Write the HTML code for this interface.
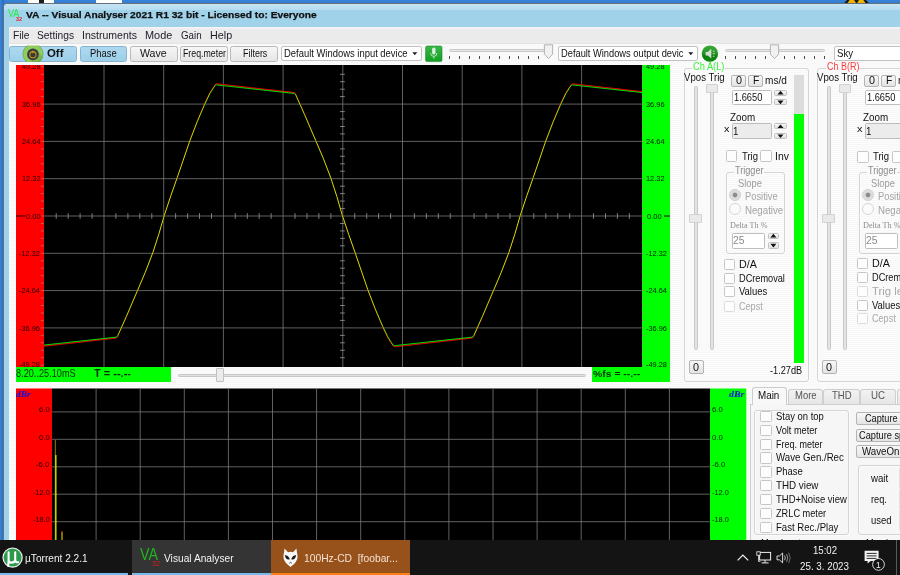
<!DOCTYPE html>
<html lang="en"><head><meta charset="utf-8"><title>VA -- Visual Analyser 2021 R1 32 bit</title>
<style>
html,body{margin:0;padding:0;background:#fafafa}
#r{position:relative;width:900px;height:575px;overflow:hidden;background:#fafafa;font-family:"Liberation Sans",sans-serif}
#r>div,#r>svg{position:absolute}
#r>svg{overflow:visible}
.t{white-space:pre;transform-origin:0 0}
</style></head>
<body>
<div id="r">
<div style="left:0px;top:0px;width:900px;height:4px;background:linear-gradient(#3784d8,#3179cb)"></div>
<div style="left:0px;top:0px;width:4px;height:541px;background:linear-gradient(90deg,#3a86d9,#2368bf)"></div>
<div style="left:28.3px;top:0px;width:25.7px;height:3px;background:#fff"></div>
<div style="left:38.6px;top:0px;width:5.2px;height:3px;background:#1c1c1c"></div>
<div style="left:95.8px;top:0px;width:26.2px;height:3px;background:#fff"></div>
<svg style="left:842px;top:0" width="30" height="4" viewBox="842 0 30 4"><path d="M844 3.2 L847 0 H866 L869 3.2 Z" fill="#1a1a1a"/><path d="M847.6 3 L849.6 0 H854 L856 3 Z M857.2 3 L859 0 H863.4 L865.4 3 Z" fill="#f0b400"/></svg>
<div style="left:3.2px;top:2.9px;width:900px;height:540px;background:#a0d2ea;border:0.9px solid #66717c;border-radius:4px 0 0 0;box-sizing:border-box"></div>
<div style="left:4.1px;top:3.8px;width:896px;height:6.6px;background:linear-gradient(#c8e5f4,#b3dbef);border-radius:3.5px 0 0 0"></div>
<div style="left:8.7px;top:26.5px;width:892px;height:515px;background:repeating-linear-gradient(#fcfcfc 0,#fcfcfc 0.8px,#f6f6f6 1.4px,#fcfcfc 2px)"></div>
<div style="left:8.7px;top:26.5px;width:892px;height:17.2px;background:linear-gradient(#f6f6f6,#ebebeb 3px,#ebebeb 15.5px,#dfdfdf)"></div>
<div style="left:8.7px;top:43.7px;width:892px;height:21px;background:#f9f9f9"></div>
<div class="t" style="left:7.55px;top:7.55px;font:normal 11.5px/1 'Liberation Sans', sans-serif;color:#22ee44;transform:scaleX(0.783);">VA</div>
<div class="t" style="left:15.53px;top:16.80px;font:bold 5px/1 'Liberation Sans', sans-serif;color:#ee2222;transform:scaleX(1.079);">32</div>
<div class="t" style="left:25.79px;top:9.90px;font:bold 9.8px/1 'Liberation Sans', sans-serif;color:#101010;transform:scaleX(1.045);-webkit-text-stroke:0.25px #101010;">VA -- Visual Analyser 2021 R1 32 bit - Licensed to: Everyone</div>
<div class="t" style="left:12.99px;top:30.70px;font:normal 10.2px/1 'Liberation Sans', sans-serif;color:#1c1c28;transform:scaleX(1.006);">File</div>
<div class="t" style="left:36.99px;top:30.70px;font:normal 10.2px/1 'Liberation Sans', sans-serif;color:#1c1c28;transform:scaleX(1.006);">Settings</div>
<div class="t" style="left:82.17px;top:30.70px;font:normal 10.2px/1 'Liberation Sans', sans-serif;color:#1c1c28;transform:scaleX(1.034);">Instruments</div>
<div class="t" style="left:145.45px;top:30.70px;font:normal 10.2px/1 'Liberation Sans', sans-serif;color:#1c1c28;transform:scaleX(1.072);">Mode</div>
<div class="t" style="left:181.21px;top:30.70px;font:normal 10.2px/1 'Liberation Sans', sans-serif;color:#1c1c28;transform:scaleX(0.958);">Gain</div>
<div class="t" style="left:210.26px;top:30.70px;font:normal 10.2px/1 'Liberation Sans', sans-serif;color:#1c1c28;transform:scaleX(1.060);">Help</div>
<div style="left:9.2px;top:45.5px;width:68.3px;height:16.3px;background:linear-gradient(#add9ef,#9dcfe9);border:0.8px solid #86b3cf;border-radius:2.5px;box-sizing:border-box"></div>
<div class="t" style="left:47.13px;top:48.40px;font:bold 11.8px/1 'Liberation Sans', sans-serif;color:#111;transform:scaleX(0.967);">Off</div>
<div style="left:79.5px;top:45.5px;width:47.9px;height:16.3px;background:linear-gradient(#add9ef,#9dcfe9);border:0.8px solid #86b3cf;border-radius:2.5px;box-sizing:border-box"></div>
<div class="t" style="left:90.23px;top:48.70px;font:normal 10.2px/1 'Liberation Sans', sans-serif;color:#111;transform:scaleX(0.921);">Phase</div>
<div style="left:129.6px;top:45.5px;width:48px;height:16.3px;background:linear-gradient(#f6f6f6,#e6e6e6);border:0.8px solid #b9b9b9;border-radius:2.5px;box-sizing:border-box"></div>
<div class="t" style="left:140.47px;top:48.70px;font:normal 10.2px/1 'Liberation Sans', sans-serif;color:#111;transform:scaleX(1.041);">Wave</div>
<div style="left:180px;top:45.5px;width:48.3px;height:16.3px;background:linear-gradient(#f6f6f6,#e6e6e6);border:0.8px solid #b9b9b9;border-radius:2.5px;box-sizing:border-box"></div>
<div class="t" style="left:182.56px;top:48.70px;font:normal 10.2px/1 'Liberation Sans', sans-serif;color:#111;transform:scaleX(0.863);">Freq.meter</div>
<div style="left:230.3px;top:45.5px;width:47.7px;height:16.3px;background:linear-gradient(#f6f6f6,#e6e6e6);border:0.8px solid #b9b9b9;border-radius:2.5px;box-sizing:border-box"></div>
<div class="t" style="left:242.55px;top:48.70px;font:normal 10.2px/1 'Liberation Sans', sans-serif;color:#111;transform:scaleX(0.877);">Filters</div>
<svg style="left:21px;top:42px" width="26" height="24" viewBox="21 42 26 24">
<clipPath id="co"><rect x="21" y="45.4" width="26" height="16.8"/></clipPath>
<g clip-path="url(#co)">
<circle cx="33" cy="53.9" r="10.3" fill="#8fcd60"/>
<clipPath id="co2"><circle cx="33" cy="53.9" r="10.3"/></clipPath><path clip-path="url(#co2)" d="M37 50.3 L44 58.5 L41 64 L33 64 L28.8 58.6 Z" fill="#7ab551"/>
<circle cx="33" cy="53.9" r="10.1" fill="none" stroke="#4a6a3a" stroke-width="0.5" opacity="0.6"/>
</g>
<circle cx="32.9" cy="54.4" r="5.8" fill="#3a3a3c"/>
<circle cx="32.9" cy="54.7" r="3.1" fill="none" stroke="#c49a18" stroke-width="1.05"/>
<rect x="32.3" y="50.6" width="1.2" height="2.6" fill="#c49a18"/>
</svg>
<div style="left:281px;top:45.6px;width:141.4px;height:15.6px;background:#fff;border:0.8px solid #c2c2c2;border-radius:2px;box-sizing:border-box"></div>
<div class="t" style="left:283.93px;top:48.70px;font:normal 10.2px/1 'Liberation Sans', sans-serif;color:#111;transform:scaleX(0.925);">Default Windows input device</div>
<svg style="left:412.2px;top:51.5px" width="6" height="4"><path d="M0.3 0.3 L5.3 0.3 L2.8 3.2 Z" fill="#222"/></svg>
<div style="left:557.6px;top:45.6px;width:140.8px;height:15.6px;background:#fff;border:0.8px solid #c2c2c2;border-radius:2px;box-sizing:border-box"></div>
<div class="t" style="left:560.53px;top:48.70px;font:normal 10.2px/1 'Liberation Sans', sans-serif;color:#111;transform:scaleX(0.912);">Default Windows output devic</div>
<svg style="left:688.2px;top:51.5px" width="6" height="4"><path d="M0.3 0.3 L5.3 0.3 L2.8 3.2 Z" fill="#222"/></svg>
<div style="left:833.6px;top:45.6px;width:71.4px;height:15.6px;background:#fff;border:0.8px solid #c2c2c2;border-radius:2px;box-sizing:border-box"></div>
<div class="t" style="left:836.52px;top:48.70px;font:normal 10.2px/1 'Liberation Sans', sans-serif;color:#111;transform:scaleX(0.943);">Sky</div>
<svg style="left:425px;top:45px" width="18" height="18" viewBox="425 45 18 18">
<defs><linearGradient id="gmic" x1="0" y1="0" x2="0" y2="1"><stop offset="0" stop-color="#3cb54a"/><stop offset="1" stop-color="#10a020"/></linearGradient></defs>
<rect x="425.6" y="46" width="16.4" height="15.6" rx="1.5" fill="url(#gmic)" stroke="#1c8a2a" stroke-width="0.6"/>
<rect x="432.1" y="47.6" width="3.4" height="7" rx="1.7" fill="#d8f0d8"/>
<path d="M430.6 53 A3.2 3.4 0 0 0 437 53" fill="none" stroke="#c8e8c8" stroke-width="0.9"/>
<rect x="433.4" y="56.4" width="0.9" height="2.4" fill="#c8e8c8"/>
</svg>
<div style="left:449px;top:48.9px;width:97px;height:3.3px;background:#e6e6e6;border:0.7px solid #cacaca;border-radius:1.6px;box-sizing:border-box"></div>
<div style="left:449.1px;top:55.6px;width:1.1px;height:3px;background:#4a4a4a"></div>
<div style="left:459px;top:55.6px;width:1.1px;height:3px;background:#4a4a4a"></div>
<div style="left:468.9px;top:55.6px;width:1.1px;height:3px;background:#4a4a4a"></div>
<div style="left:478.8px;top:55.6px;width:1.1px;height:3px;background:#4a4a4a"></div>
<div style="left:488.7px;top:55.6px;width:1.1px;height:3px;background:#4a4a4a"></div>
<div style="left:498.6px;top:55.6px;width:1.1px;height:3px;background:#4a4a4a"></div>
<div style="left:508.5px;top:55.6px;width:1.1px;height:3px;background:#4a4a4a"></div>
<div style="left:518.4px;top:55.6px;width:1.1px;height:3px;background:#4a4a4a"></div>
<div style="left:528.3px;top:55.6px;width:1.1px;height:3px;background:#4a4a4a"></div>
<div style="left:538.2px;top:55.6px;width:1.1px;height:3px;background:#4a4a4a"></div>
<svg style="left:543px;top:43.5px" width="12" height="16"><path d="M1.4 0.8 L9.6 0.8 L9.6 10.2 L5.5 14.6 L1.4 10.2 Z" fill="#f1f1f1" stroke="#adadad" stroke-width="0.9"/></svg>
<div style="left:725px;top:48.9px;width:99.6px;height:3.3px;background:#e6e6e6;border:0.7px solid #cacaca;border-radius:1.6px;box-sizing:border-box"></div>
<div style="left:725.1px;top:55.6px;width:1.1px;height:3px;background:#4a4a4a"></div>
<div style="left:734.98px;top:55.6px;width:1.1px;height:3px;background:#4a4a4a"></div>
<div style="left:744.86px;top:55.6px;width:1.1px;height:3px;background:#4a4a4a"></div>
<div style="left:754.74px;top:55.6px;width:1.1px;height:3px;background:#4a4a4a"></div>
<div style="left:764.62px;top:55.6px;width:1.1px;height:3px;background:#4a4a4a"></div>
<div style="left:784.38px;top:55.6px;width:1.1px;height:3px;background:#4a4a4a"></div>
<div style="left:794.26px;top:55.6px;width:1.1px;height:3px;background:#4a4a4a"></div>
<div style="left:804.14px;top:55.6px;width:1.1px;height:3px;background:#4a4a4a"></div>
<div style="left:814.02px;top:55.6px;width:1.1px;height:3px;background:#4a4a4a"></div>
<div style="left:823.9px;top:55.6px;width:1.1px;height:3px;background:#4a4a4a"></div>
<svg style="left:768.5px;top:43.5px" width="12" height="16"><path d="M1.4 0.8 L9.6 0.8 L9.6 10.2 L5.5 14.6 L1.4 10.2 Z" fill="#f1f1f1" stroke="#adadad" stroke-width="0.9"/></svg>
<svg style="left:700px;top:44px" width="20" height="20" viewBox="700 44 20 20">
<defs><linearGradient id="gspk" x1="0" y1="0" x2="0" y2="1"><stop offset="0" stop-color="#3cab3c"/><stop offset="0.5" stop-color="#259425"/><stop offset="0.62" stop-color="#0c7e0c"/><stop offset="1" stop-color="#0a8a0a"/></linearGradient></defs>
<circle cx="709.9" cy="53.6" r="8.2" fill="url(#gspk)"/>
<path d="M705.6 52 L707.8 52 L711.3 48.8 L711.3 58.6 L707.8 55.4 L705.6 55.4 Z" fill="#d4dcd4"/>
<path d="M712.8 51.2 L714.6 51.2 M712.8 53.7 L715 53.7 M712.8 56.2 L714.6 56.2" stroke="#d0ecd0" stroke-width="0.8"/>
</svg>
<div style="left:16px;top:65px;width:28px;height:302px;background:#ff0000"></div>
<div style="left:44px;top:65px;width:598px;height:302px;background:#000"></div>
<div style="left:642px;top:65px;width:28px;height:317px;background:#00ff00"></div>
<svg style="left:0;top:0" width="900" height="575" viewBox="0 0 900 575"><g stroke="#787878" stroke-width="0.8" fill="none"><path d="M104.0 65V367"/><path d="M163.7 65V367"/><path d="M223.4 65V367"/><path d="M283.1 65V367"/><path d="M342.8 65V367"/><path d="M402.5 65V367"/><path d="M462.2 65V367"/><path d="M521.9 65V367"/><path d="M581.6 65V367"/><path d="M44 104.1H642"/><path d="M44 141.4H642"/><path d="M44 178.7H642"/><path d="M44 216.0H642"/><path d="M44 253.3H642"/><path d="M44 290.6H642"/><path d="M44 327.9H642"/></g><path d="M56.2 213.2V218.8M68.2 213.2V218.8M80.1 213.2V218.8M92.1 213.2V218.8M115.9 213.2V218.8M127.9 213.2V218.8M139.8 213.2V218.8M151.8 213.2V218.8M175.6 213.2V218.8M187.6 213.2V218.8M199.5 213.2V218.8M211.5 213.2V218.8M235.3 213.2V218.8M247.3 213.2V218.8M259.2 213.2V218.8M271.2 213.2V218.8M295.0 213.2V218.8M307.0 213.2V218.8M318.9 213.2V218.8M330.9 213.2V218.8M354.7 213.2V218.8M366.7 213.2V218.8M378.6 213.2V218.8M390.6 213.2V218.8M414.4 213.2V218.8M426.4 213.2V218.8M438.3 213.2V218.8M450.3 213.2V218.8M474.1 213.2V218.8M486.1 213.2V218.8M498.0 213.2V218.8M510.0 213.2V218.8M533.8 213.2V218.8M545.8 213.2V218.8M557.7 213.2V218.8M569.7 213.2V218.8M593.5 213.2V218.8M605.5 213.2V218.8M617.4 213.2V218.8M629.4 213.2V218.8M340 74.3H344.8M340 81.7H344.8M340 89.2H344.8M340 96.6H344.8M340 111.6H344.8M340 119.0H344.8M340 126.5H344.8M340 133.9H344.8M340 148.9H344.8M340 156.3H344.8M340 163.8H344.8M340 171.2H344.8M340 186.2H344.8M340 193.6H344.8M340 201.1H344.8M340 208.5H344.8M340 223.5H344.8M340 230.9H344.8M340 238.4H344.8M340 245.8H344.8M340 260.8H344.8M340 268.2H344.8M340 275.7H344.8M340 283.1H344.8M340 298.1H344.8M340 305.5H344.8M340 313.0H344.8M340 320.4H344.8M340 335.4H344.8M340 342.8H344.8M340 350.3H344.8M340 357.7H344.8" stroke="#8a8a8a" stroke-width="0.9" fill="none"/><path d="M40.8 66.8H44M642 66.8H645M40.8 74.3H44M642 74.3H645M40.8 81.7H44M642 81.7H645M40.8 89.2H44M642 89.2H645M40.8 96.6H44M642 96.6H645M40.8 104.1H44M642 104.1H645M40.8 111.6H44M642 111.6H645M40.8 119.0H44M642 119.0H645M40.8 126.5H44M642 126.5H645M40.8 133.9H44M642 133.9H645M40.8 141.4H44M642 141.4H645M40.8 148.9H44M642 148.9H645M40.8 156.3H44M642 156.3H645M40.8 163.8H44M642 163.8H645M40.8 171.2H44M642 171.2H645M40.8 178.7H44M642 178.7H645M40.8 186.2H44M642 186.2H645M40.8 193.6H44M642 193.6H645M40.8 201.1H44M642 201.1H645M40.8 208.5H44M642 208.5H645M40.8 216.0H44M642 216.0H645M40.8 223.5H44M642 223.5H645M40.8 230.9H44M642 230.9H645M40.8 238.4H44M642 238.4H645M40.8 245.8H44M642 245.8H645M40.8 253.3H44M642 253.3H645M40.8 260.8H44M642 260.8H645M40.8 268.2H44M642 268.2H645M40.8 275.7H44M642 275.7H645M40.8 283.1H44M642 283.1H645M40.8 290.6H44M642 290.6H645M40.8 298.1H44M642 298.1H645M40.8 305.5H44M642 305.5H645M40.8 313.0H44M642 313.0H645M40.8 320.4H44M642 320.4H645M40.8 327.9H44M642 327.9H645M40.8 335.4H44M642 335.4H645M40.8 342.8H44M642 342.8H645M40.8 350.3H44M642 350.3H645M40.8 357.7H44M642 357.7H645M40.8 365.2H44M642 365.2H645" stroke="#b08080" stroke-width="0.8" fill="none" opacity="0.8"/><path d="M16 216H25.5M664 216H670" stroke="#300" stroke-width="1"/><clipPath id="cp"><rect x="44" y="65" width="598" height="302"/></clipPath><g clip-path="url(#cp)" fill="none" stroke-linejoin="round"><polyline points="-191.7,215.3 -185.2,195.7 -178.7,177.1 -166.2,140.5 -158.7,120.9 -151.2,103.2 -146.2,92.8 -142.4,86.8 -140.9,84.6 -139.8,83.7 -61.5,92.5 -60.3,94.0 -51.7,113.4 -40.4,139.9 -32.7,158.1 -25.2,177.6 -19.2,196.2 -13.7,215.3 -7.2,234.9 -0.7,253.5 11.8,290.1 19.3,309.7 26.8,327.4 31.8,337.8 35.6,343.8 37.1,346.0 38.2,346.9 116.5,338.1 117.7,336.6 126.3,317.2 137.6,290.7 145.3,272.5 152.8,253.0 158.8,234.4 164.3,215.3 170.8,195.7 177.3,177.1 189.8,140.5 197.3,120.9 204.8,103.2 209.8,92.8 213.6,86.8 215.1,84.6 216.2,83.7 294.5,92.5 295.7,94.0 304.3,113.4 315.6,139.9 323.3,158.1 330.8,177.6 336.8,196.2 342.3,215.3 348.8,234.9 355.3,253.5 367.8,290.1 375.3,309.7 382.8,327.4 387.8,337.8 391.6,343.8 393.1,346.0 394.2,346.9 472.5,338.1 473.7,336.6 482.3,317.2 493.6,290.7 501.3,272.5 508.8,253.0 514.8,234.4 520.3,215.3 526.8,195.7 533.3,177.1 545.8,140.5 553.3,120.9 560.8,103.2 565.8,92.8 569.6,86.8 571.1,84.6 572.2,83.7 650.5,92.5 651.7,94.0 660.3,113.4 671.6,139.9 679.3,158.1 686.8,177.6 692.8,196.2 698.3,215.3 704.8,234.9 711.3,253.5 723.8,290.1 731.3,309.7 738.8,327.4 743.8,337.8 747.6,343.8 749.1,346.0 750.2,346.9 828.5,338.1 829.7,336.6 838.3,317.2 849.6,290.7 857.3,272.5 864.8,253.0 870.8,234.4 876.3,215.3" stroke="#e00000" stroke-width="1" style="mix-blend-mode:screen"/><polyline points="-191.7,215.3 -185.2,195.9 -178.7,177.5 -166.2,141.1 -158.7,121.7 -151.2,104.2 -146.2,93.8 -142.4,87.8 -140.9,85.6 -139.8,84.9 -61.5,93.5 -60.3,95.0 -51.7,114.2 -40.4,140.5 -32.7,158.5 -25.2,178.0 -19.2,196.4 -13.7,215.3 -7.2,234.7 -0.7,253.1 11.8,289.5 19.3,308.9 26.8,326.4 31.8,336.8 35.6,342.8 37.1,345.0 38.2,345.7 116.5,337.1 117.7,335.6 126.3,316.4 137.6,290.1 145.3,272.1 152.8,252.6 158.8,234.2 164.3,215.3 170.8,195.9 177.3,177.5 189.8,141.1 197.3,121.7 204.8,104.2 209.8,93.8 213.6,87.8 215.1,85.6 216.2,84.9 294.5,93.5 295.7,95.0 304.3,114.2 315.6,140.5 323.3,158.5 330.8,178.0 336.8,196.4 342.3,215.3 348.8,234.7 355.3,253.1 367.8,289.5 375.3,308.9 382.8,326.4 387.8,336.8 391.6,342.8 393.1,345.0 394.2,345.7 472.5,337.1 473.7,335.6 482.3,316.4 493.6,290.1 501.3,272.1 508.8,252.6 514.8,234.2 520.3,215.3 526.8,195.9 533.3,177.5 545.8,141.1 553.3,121.7 560.8,104.2 565.8,93.8 569.6,87.8 571.1,85.6 572.2,84.9 650.5,93.5 651.7,95.0 660.3,114.2 671.6,140.5 679.3,158.5 686.8,178.0 692.8,196.4 698.3,215.3 704.8,234.7 711.3,253.1 723.8,289.5 731.3,308.9 738.8,326.4 743.8,336.8 747.6,342.8 749.1,345.0 750.2,345.7 828.5,337.1 829.7,335.6 838.3,316.4 849.6,290.1 857.3,272.1 864.8,252.6 870.8,234.2 876.3,215.3" stroke="#00dc00" stroke-width="1" style="mix-blend-mode:screen"/></g><rect x="16" y="388.5" width="36" height="160" fill="#ff0000"/><rect x="52" y="388.5" width="658" height="160" fill="#000"/><rect x="710" y="388.5" width="36.3" height="160" fill="#00ff00"/><g stroke="#787878" stroke-width="0.8" fill="none"><path d="M96.1 388.5V541"/><path d="M140.2 388.5V541"/><path d="M184.3 388.5V541"/><path d="M228.4 388.5V541"/><path d="M272.5 388.5V541"/><path d="M316.6 388.5V541"/><path d="M360.7 388.5V541"/><path d="M404.8 388.5V541"/><path d="M448.9 388.5V541"/><path d="M493.0 388.5V541"/><path d="M537.1 388.5V541"/><path d="M581.2 388.5V541"/><path d="M625.3 388.5V541"/><path d="M669.4 388.5V541"/><path d="M52 411.9H710"/><path d="M52 439.3H710"/><path d="M52 466.8H710"/><path d="M52 494.2H710"/><path d="M52 521.7H710"/></g><path d="M55.3 440V541" stroke="#a09000" stroke-width="0.9"/><path d="M55.9 455V541" stroke="#ffff00" stroke-width="1.1"/><path d="M62 532V541" stroke="#d0c000" stroke-width="1.2"/><path d="M62 531V533" stroke="#c03000" stroke-width="1.2"/></svg>
<div class="t" style="left:21.83px;top:63.20px;font:normal 7.2px/1 'Liberation Sans', sans-serif;color:#240000;transform:scaleX(1.029);">49.28</div>
<div class="t" style="left:646.23px;top:63.20px;font:normal 7.2px/1 'Liberation Sans', sans-serif;color:#001c00;transform:scaleX(1.029);">49.28</div>
<div class="t" style="left:21.83px;top:101.20px;font:normal 7.2px/1 'Liberation Sans', sans-serif;color:#240000;transform:scaleX(1.029);">36.96</div>
<div class="t" style="left:646.23px;top:101.20px;font:normal 7.2px/1 'Liberation Sans', sans-serif;color:#001c00;transform:scaleX(1.029);">36.96</div>
<div class="t" style="left:21.83px;top:138.20px;font:normal 7.2px/1 'Liberation Sans', sans-serif;color:#240000;transform:scaleX(1.029);">24.64</div>
<div class="t" style="left:646.23px;top:138.20px;font:normal 7.2px/1 'Liberation Sans', sans-serif;color:#001c00;transform:scaleX(1.029);">24.64</div>
<div class="t" style="left:21.83px;top:175.20px;font:normal 7.2px/1 'Liberation Sans', sans-serif;color:#240000;transform:scaleX(1.029);">12.32</div>
<div class="t" style="left:646.23px;top:175.20px;font:normal 7.2px/1 'Liberation Sans', sans-serif;color:#001c00;transform:scaleX(1.029);">12.32</div>
<div class="t" style="left:25.62px;top:213.20px;font:normal 7.2px/1 'Liberation Sans', sans-serif;color:#240000;transform:scaleX(1.051);">0.00</div>
<div class="t" style="left:646.82px;top:213.20px;font:normal 7.2px/1 'Liberation Sans', sans-serif;color:#001c00;transform:scaleX(1.051);">0.00</div>
<div class="t" style="left:19.43px;top:250.20px;font:normal 7.2px/1 'Liberation Sans', sans-serif;color:#240000;transform:scaleX(1.026);">-12.32</div>
<div class="t" style="left:646.23px;top:250.20px;font:normal 7.2px/1 'Liberation Sans', sans-serif;color:#001c00;transform:scaleX(1.026);">-12.32</div>
<div class="t" style="left:19.43px;top:287.20px;font:normal 7.2px/1 'Liberation Sans', sans-serif;color:#240000;transform:scaleX(1.026);">-24.64</div>
<div class="t" style="left:646.23px;top:287.20px;font:normal 7.2px/1 'Liberation Sans', sans-serif;color:#001c00;transform:scaleX(1.026);">-24.64</div>
<div class="t" style="left:19.43px;top:325.20px;font:normal 7.2px/1 'Liberation Sans', sans-serif;color:#240000;transform:scaleX(1.026);">-36.96</div>
<div class="t" style="left:646.23px;top:325.20px;font:normal 7.2px/1 'Liberation Sans', sans-serif;color:#001c00;transform:scaleX(1.026);">-36.96</div>
<div class="t" style="left:19.43px;top:361.20px;font:normal 7.2px/1 'Liberation Sans', sans-serif;color:#240000;transform:scaleX(1.026);">-49.28</div>
<div class="t" style="left:646.23px;top:361.20px;font:normal 7.2px/1 'Liberation Sans', sans-serif;color:#001c00;transform:scaleX(1.026);">-49.28</div>
<div style="left:16px;top:62px;width:28px;height:3px;background:#fafafa"></div>
<div style="left:642px;top:62px;width:28px;height:3px;background:#fafafa"></div>
<div style="left:16px;top:367px;width:155.3px;height:14.7px;background:#00ff00"></div>
<div style="left:592px;top:367px;width:78px;height:14.7px;background:#00ff00"></div>
<div class="t" style="left:16.14px;top:368.70px;font:normal 10.2px/1 'Liberation Sans', sans-serif;color:#0a2a0a;transform:scaleX(0.900);">8.20..25.10mS</div>
<div class="t" style="left:94.15px;top:368.80px;font:bold 10px/1 'Liberation Sans', sans-serif;color:#0a2a0a;transform:scaleX(1.101);">T = --.--</div>
<div class="t" style="left:592.78px;top:369.10px;font:bold 9.4px/1 'Liberation Sans', sans-serif;color:#0a2a0a;transform:scaleX(1.110);">%fs = --.--</div>
<div style="left:178px;top:373.6px;width:407.5px;height:3px;background:#e2e2e2;border:0.7px solid #c6c6c6;border-radius:1.5px;box-sizing:border-box"></div>
<div style="left:215.5px;top:368.2px;width:8.4px;height:13.4px;background:#ececec;border:0.8px solid #c2c2c2;border-radius:1px;box-sizing:border-box"></div>
<div class="t" style="left:38.81px;top:406.20px;font:normal 7.2px/1 'Liberation Sans', sans-serif;color:#240000;transform:scaleX(1.072);">6.0</div>
<div class="t" style="left:711.61px;top:406.20px;font:normal 7.2px/1 'Liberation Sans', sans-serif;color:#001c00;transform:scaleX(1.072);">6.0</div>
<div class="t" style="left:38.81px;top:434.20px;font:normal 7.2px/1 'Liberation Sans', sans-serif;color:#240000;transform:scaleX(1.072);">0.0</div>
<div class="t" style="left:711.61px;top:434.20px;font:normal 7.2px/1 'Liberation Sans', sans-serif;color:#001c00;transform:scaleX(1.072);">0.0</div>
<div class="t" style="left:36.21px;top:461.20px;font:normal 7.2px/1 'Liberation Sans', sans-serif;color:#240000;transform:scaleX(1.075);">-6.0</div>
<div class="t" style="left:711.61px;top:461.20px;font:normal 7.2px/1 'Liberation Sans', sans-serif;color:#001c00;transform:scaleX(1.075);">-6.0</div>
<div class="t" style="left:32.83px;top:489.20px;font:normal 7.2px/1 'Liberation Sans', sans-serif;color:#240000;transform:scaleX(1.020);">-12.0</div>
<div class="t" style="left:711.63px;top:489.20px;font:normal 7.2px/1 'Liberation Sans', sans-serif;color:#001c00;transform:scaleX(1.020);">-12.0</div>
<div class="t" style="left:32.83px;top:516.20px;font:normal 7.2px/1 'Liberation Sans', sans-serif;color:#240000;transform:scaleX(1.020);">-18.0</div>
<div class="t" style="left:711.63px;top:516.20px;font:normal 7.2px/1 'Liberation Sans', sans-serif;color:#001c00;transform:scaleX(1.020);">-18.0</div>
<div class="t" style="left:16.13px;top:390.60px;font:italic bold 8.4px/1 'Liberation Serif', serif;color:#1010e0;transform:scaleX(1.130);">dBr</div>
<div class="t" style="left:728.71px;top:390.60px;font:italic bold 8.4px/1 'Liberation Serif', serif;color:#1010e0;transform:scaleX(1.176);">dBr</div>
<div style="left:683.7px;top:68.3px;width:124.9px;height:313.7px;border:0.9px solid #d4d4d4;border-radius:3px;box-sizing:border-box;box-shadow:inset 0.6px 0.6px 0 #fff, 0.6px 0.6px 0 #fff"></div>
<div style="left:692.3px;top:66px;width:32.4px;height:5px;background:#fafafa"></div>
<div class="t" style="left:692.84px;top:61.70px;font:normal 10.2px/1 'Liberation Sans', sans-serif;color:#3cf03c;transform:scaleX(0.909);">Ch A(L)</div>
<div class="t" style="left:683.82px;top:72.70px;font:normal 10.2px/1 'Liberation Sans', sans-serif;color:#111;transform:scaleX(0.946);">Vpos Trig</div>
<div style="left:694.2px;top:86.3px;width:3.5px;height:263.5px;background:#e3e3e3;border:0.7px solid #c9c9c9;border-radius:1.7px;box-sizing:border-box"></div>
<div style="left:710.2px;top:86.3px;width:3.5px;height:263.5px;background:#e3e3e3;border:0.7px solid #c9c9c9;border-radius:1.7px;box-sizing:border-box"></div>
<div style="left:705.8px;top:83.5px;width:12.2px;height:9px;background:#e9e9e9;border:0.7px solid #d2d2d2;border-radius:1px;box-sizing:border-box"></div>
<div style="left:689.4px;top:214.2px;width:12.3px;height:9.1px;background:#e9e9e9;border:0.7px solid #d2d2d2;border-radius:1px;box-sizing:border-box"></div>
<div style="left:731.3px;top:75.3px;width:15px;height:11.7px;background:linear-gradient(#f7f7f7,#e4e4e4);border:0.8px solid #b4b4b4;border-radius:2px;box-sizing:border-box"></div>
<div class="t" style="left:735.96px;top:75.70px;font:normal 10.2px/1 'Liberation Sans', sans-serif;color:#111;transform:scaleX(1.061);">0</div>
<div style="left:748.3px;top:75.3px;width:15px;height:11.7px;background:linear-gradient(#f7f7f7,#e4e4e4);border:0.8px solid #b4b4b4;border-radius:2px;box-sizing:border-box"></div>
<div class="t" style="left:752.78px;top:75.70px;font:normal 10.2px/1 'Liberation Sans', sans-serif;color:#111;transform:scaleX(1.014);">F</div>
<div class="t" style="left:765.00px;top:75.70px;font:normal 10.2px/1 'Liberation Sans', sans-serif;color:#111;transform:scaleX(0.988);">ms/d</div>
<div style="left:731.7px;top:89.7px;width:40px;height:15.6px;background:#fff;border:0.8px solid #bdbdbd;border-radius:1.5px;box-sizing:border-box"></div>
<div class="t" style="left:733.74px;top:92.70px;font:normal 10.2px/1 'Liberation Sans', sans-serif;color:#111;transform:scaleX(0.909);">1.6650</div>
<div style="left:774.2px;top:89.7px;width:12.5px;height:6.084px;background:linear-gradient(#f7f7f7,#e2e2e2);border:0.7px solid #c0c0c0;border-radius:1.5px;box-sizing:border-box"></div>
<svg style="left:0;top:0" width="900" height="575"><path d="M777.5 94.4L783.5 94.4L780.5 90.8Z" fill="#111"/></svg>
<div style="left:774.2px;top:99.216px;width:12.5px;height:6.084px;background:linear-gradient(#f7f7f7,#e2e2e2);border:0.7px solid #c0c0c0;border-radius:1.5px;box-sizing:border-box"></div>
<svg style="left:0;top:0" width="900" height="575"><path d="M777.5 100.6L783.5 100.6L780.5 104.2Z" fill="#111"/></svg>
<div class="t" style="left:730.01px;top:112.70px;font:normal 10.2px/1 'Liberation Sans', sans-serif;color:#111;transform:scaleX(0.968);">Zoom</div>
<div class="t" style="left:723.66px;top:124.70px;font:normal 9.2px/1 'Liberation Sans', sans-serif;color:#111;transform:scaleX(1.180);">x</div>
<div style="left:731.7px;top:123.3px;width:40px;height:15.9px;background:#ececec;border:0.8px solid #bdbdbd;border-radius:1.5px;box-sizing:border-box"></div>
<div class="t" style="left:733.11px;top:126.70px;font:normal 10.2px/1 'Liberation Sans', sans-serif;color:#111;transform:scaleX(0.956);">1</div>
<div style="left:774.2px;top:123.3px;width:12.5px;height:6.201px;background:linear-gradient(#f7f7f7,#e2e2e2);border:0.7px solid #c0c0c0;border-radius:1.5px;box-sizing:border-box"></div>
<svg style="left:0;top:0" width="900" height="575"><path d="M777.5 128.1L783.5 128.1L780.5 124.5Z" fill="#111"/></svg>
<div style="left:774.2px;top:132.999px;width:12.5px;height:6.201px;background:linear-gradient(#f7f7f7,#e2e2e2);border:0.7px solid #c0c0c0;border-radius:1.5px;box-sizing:border-box"></div>
<svg style="left:0;top:0" width="900" height="575"><path d="M777.5 134.4L783.5 134.4L780.5 138.0Z" fill="#111"/></svg>
<div style="left:793.7px;top:75.3px;width:10.5px;height:39px;background:#dcdcdc"></div>
<div style="left:793.7px;top:114.2px;width:10.5px;height:249px;background:#00ff00"></div>
<div class="t" style="left:769.74px;top:365.70px;font:normal 10.2px/1 'Liberation Sans', sans-serif;color:#111;transform:scaleX(0.900);">-1.27dB</div>
<div style="left:725.8px;top:150.3px;width:11.6px;height:11.6px;background:#fdfdfd;border:0.8px solid #c6c6c6;border-radius:1.5px;box-sizing:border-box"></div>
<div class="t" style="left:741.52px;top:151.70px;font:normal 10.2px/1 'Liberation Sans', sans-serif;color:#111;transform:scaleX(0.933);">Trig</div>
<div style="left:760px;top:150.3px;width:11.6px;height:11.6px;background:#fdfdfd;border:0.8px solid #c6c6c6;border-radius:1.5px;box-sizing:border-box"></div>
<div class="t" style="left:775.28px;top:151.70px;font:normal 10.2px/1 'Liberation Sans', sans-serif;color:#111;transform:scaleX(1.024);">Inv</div>
<div style="left:725.8px;top:171.7px;width:59.2px;height:82.5px;border:0.9px solid #d4d4d4;border-radius:3px;box-sizing:border-box;box-shadow:inset 0.6px 0.6px 0 #fff, 0.6px 0.6px 0 #fff"></div>
<div style="left:733.5px;top:169px;width:30.5px;height:5px;background:#fafafa"></div>
<div class="t" style="left:734.54px;top:165.70px;font:normal 10.2px/1 'Liberation Sans', sans-serif;color:#8a8a8a;transform:scaleX(0.894);">Trigger</div>
<div class="t" style="left:737.53px;top:178.70px;font:normal 10.2px/1 'Liberation Sans', sans-serif;color:#9a9a9a;transform:scaleX(0.914);">Slope</div>
<div style="left:729.3px;top:189.4px;width:12px;height:12px;background:radial-gradient(circle,#8c8c8c 0,#8c8c8c 1.8px,#d8d8d8 2.8px,#e2e2e2 5px);border:0.8px solid #cfcfcf;border-radius:50%;box-sizing:border-box"></div>
<div class="t" style="left:745.33px;top:191.70px;font:normal 10.2px/1 'Liberation Sans', sans-serif;color:#a4a4a4;transform:scaleX(0.917);">Positive</div>
<div style="left:729.3px;top:203.2px;width:12px;height:12px;background:#fbfbfb;border:0.8px solid #d6d6d6;border-radius:50%;box-sizing:border-box"></div>
<div class="t" style="left:745.32px;top:205.70px;font:normal 10.2px/1 'Liberation Sans', sans-serif;color:#a4a4a4;transform:scaleX(0.950);">Negative</div>
<div class="t" style="left:730.39px;top:222.00px;font:normal 7.6px/1 'Liberation Serif', serif;color:#8c8c8c;transform:scaleX(1.074);">Delta Th %</div>
<div style="left:731.7px;top:232.5px;width:33.3px;height:16.2px;background:#fff;border:0.8px solid #bdbdbd;border-radius:1.5px;box-sizing:border-box"></div>
<div class="t" style="left:733.09px;top:235.70px;font:normal 10.2px/1 'Liberation Sans', sans-serif;color:#8a8a8a;transform:scaleX(1.007);">25</div>
<div style="left:767.5px;top:232.5px;width:11.7px;height:6.318px;background:linear-gradient(#f7f7f7,#e2e2e2);border:0.7px solid #c0c0c0;border-radius:1.5px;box-sizing:border-box"></div>
<svg style="left:0;top:0" width="900" height="575"><path d="M770.4 237.4L776.4 237.4L773.4 233.8Z" fill="#111"/></svg>
<div style="left:767.5px;top:242.382px;width:11.7px;height:6.318px;background:linear-gradient(#f7f7f7,#e2e2e2);border:0.7px solid #c0c0c0;border-radius:1.5px;box-sizing:border-box"></div>
<svg style="left:0;top:0" width="900" height="575"><path d="M770.4 243.8L776.4 243.8L773.4 247.4Z" fill="#111"/></svg>
<div style="left:724.2px;top:258.9px;width:11px;height:11px;background:#fdfdfd;border:0.8px solid #c6c6c6;border-radius:1.5px;box-sizing:border-box"></div>
<div class="t" style="left:739.26px;top:259.70px;font:normal 10.2px/1 'Liberation Sans', sans-serif;color:#111;transform:scaleX(1.055);">D/A</div>
<div style="left:724.2px;top:272.6px;width:11px;height:11px;background:#fdfdfd;border:0.8px solid #c6c6c6;border-radius:1.5px;box-sizing:border-box"></div>
<div class="t" style="left:739.34px;top:273.70px;font:normal 10.2px/1 'Liberation Sans', sans-serif;color:#111;transform:scaleX(0.901);">DCremoval</div>
<div style="left:724.2px;top:286.4px;width:11px;height:11px;background:#fdfdfd;border:0.8px solid #c6c6c6;border-radius:1.5px;box-sizing:border-box"></div>
<div class="t" style="left:739.33px;top:286.70px;font:normal 10.2px/1 'Liberation Sans', sans-serif;color:#111;transform:scaleX(0.928);">Values</div>
<div style="left:724.2px;top:301px;width:11px;height:11px;background:#fdfdfd;border:0.8px solid #dcdcdc;border-radius:1.5px;box-sizing:border-box"></div>
<div class="t" style="left:739.35px;top:301.70px;font:normal 10.2px/1 'Liberation Sans', sans-serif;color:#a8a8a8;transform:scaleX(0.891);">Cepst</div>
<div style="left:689.2px;top:359.7px;width:14.5px;height:14px;background:linear-gradient(#f7f7f7,#e4e4e4);border:0.8px solid #b4b4b4;border-radius:2px;box-sizing:border-box"></div>
<div class="t" style="left:693.46px;top:362.70px;font:normal 10.2px/1 'Liberation Sans', sans-serif;color:#111;transform:scaleX(1.061);">0</div>
<div style="left:816.7px;top:68.3px;width:124.9px;height:313.7px;border:0.9px solid #d4d4d4;border-radius:3px;box-sizing:border-box;box-shadow:inset 0.6px 0.6px 0 #fff, 0.6px 0.6px 0 #fff"></div>
<div style="left:826px;top:66px;width:33.4px;height:5px;background:#fafafa"></div>
<div class="t" style="left:826.55px;top:61.70px;font:normal 10.2px/1 'Liberation Sans', sans-serif;color:#ff3a3a;transform:scaleX(0.881);">Ch B(R)</div>
<div class="t" style="left:816.82px;top:72.70px;font:normal 10.2px/1 'Liberation Sans', sans-serif;color:#111;transform:scaleX(0.946);">Vpos Trig</div>
<div style="left:827.2px;top:86.3px;width:3.5px;height:263.5px;background:#e3e3e3;border:0.7px solid #c9c9c9;border-radius:1.7px;box-sizing:border-box"></div>
<div style="left:843.2px;top:86.3px;width:3.5px;height:263.5px;background:#e3e3e3;border:0.7px solid #c9c9c9;border-radius:1.7px;box-sizing:border-box"></div>
<div style="left:838.8px;top:83.5px;width:12.2px;height:9px;background:#e9e9e9;border:0.7px solid #d2d2d2;border-radius:1px;box-sizing:border-box"></div>
<div style="left:822.4px;top:214.2px;width:12.3px;height:9.1px;background:#e9e9e9;border:0.7px solid #d2d2d2;border-radius:1px;box-sizing:border-box"></div>
<div style="left:864.3px;top:75.3px;width:15px;height:11.7px;background:linear-gradient(#f7f7f7,#e4e4e4);border:0.8px solid #b4b4b4;border-radius:2px;box-sizing:border-box"></div>
<div class="t" style="left:868.96px;top:75.70px;font:normal 10.2px/1 'Liberation Sans', sans-serif;color:#111;transform:scaleX(1.061);">0</div>
<div style="left:881.3px;top:75.3px;width:15px;height:11.7px;background:linear-gradient(#f7f7f7,#e4e4e4);border:0.8px solid #b4b4b4;border-radius:2px;box-sizing:border-box"></div>
<div class="t" style="left:885.78px;top:75.70px;font:normal 10.2px/1 'Liberation Sans', sans-serif;color:#111;transform:scaleX(1.014);">F</div>
<div class="t" style="left:898.00px;top:75.70px;font:normal 10.2px/1 'Liberation Sans', sans-serif;color:#111;transform:scaleX(0.988);">ms/d</div>
<div style="left:864.7px;top:89.7px;width:40px;height:15.6px;background:#fff;border:0.8px solid #bdbdbd;border-radius:1.5px;box-sizing:border-box"></div>
<div class="t" style="left:866.74px;top:92.70px;font:normal 10.2px/1 'Liberation Sans', sans-serif;color:#111;transform:scaleX(0.909);">1.6650</div>
<div style="left:907.2px;top:89.7px;width:12.5px;height:6.084px;background:linear-gradient(#f7f7f7,#e2e2e2);border:0.7px solid #c0c0c0;border-radius:1.5px;box-sizing:border-box"></div>
<svg style="left:0;top:0" width="900" height="575"><path d="M910.5 94.4L916.5 94.4L913.5 90.8Z" fill="#111"/></svg>
<div style="left:907.2px;top:99.216px;width:12.5px;height:6.084px;background:linear-gradient(#f7f7f7,#e2e2e2);border:0.7px solid #c0c0c0;border-radius:1.5px;box-sizing:border-box"></div>
<svg style="left:0;top:0" width="900" height="575"><path d="M910.5 100.6L916.5 100.6L913.5 104.2Z" fill="#111"/></svg>
<div class="t" style="left:863.01px;top:112.70px;font:normal 10.2px/1 'Liberation Sans', sans-serif;color:#111;transform:scaleX(0.968);">Zoom</div>
<div class="t" style="left:856.66px;top:124.70px;font:normal 9.2px/1 'Liberation Sans', sans-serif;color:#111;transform:scaleX(1.180);">x</div>
<div style="left:864.7px;top:123.3px;width:40px;height:15.9px;background:#ececec;border:0.8px solid #bdbdbd;border-radius:1.5px;box-sizing:border-box"></div>
<div class="t" style="left:866.11px;top:126.70px;font:normal 10.2px/1 'Liberation Sans', sans-serif;color:#111;transform:scaleX(0.956);">1</div>
<div style="left:907.2px;top:123.3px;width:12.5px;height:6.201px;background:linear-gradient(#f7f7f7,#e2e2e2);border:0.7px solid #c0c0c0;border-radius:1.5px;box-sizing:border-box"></div>
<svg style="left:0;top:0" width="900" height="575"><path d="M910.5 128.1L916.5 128.1L913.5 124.5Z" fill="#111"/></svg>
<div style="left:907.2px;top:132.999px;width:12.5px;height:6.201px;background:linear-gradient(#f7f7f7,#e2e2e2);border:0.7px solid #c0c0c0;border-radius:1.5px;box-sizing:border-box"></div>
<svg style="left:0;top:0" width="900" height="575"><path d="M910.5 134.4L916.5 134.4L913.5 138.0Z" fill="#111"/></svg>
<div style="left:857.4px;top:151px;width:11.6px;height:11.6px;background:#fdfdfd;border:0.8px solid #c6c6c6;border-radius:1.5px;box-sizing:border-box"></div>
<div class="t" style="left:873.12px;top:151.70px;font:normal 10.2px/1 'Liberation Sans', sans-serif;color:#111;transform:scaleX(0.933);">Trig</div>
<div style="left:891.6px;top:151px;width:11.6px;height:11.6px;background:#fdfdfd;border:0.8px solid #c6c6c6;border-radius:1.5px;box-sizing:border-box"></div>
<div class="t" style="left:906.88px;top:151.70px;font:normal 10.2px/1 'Liberation Sans', sans-serif;color:#111;transform:scaleX(1.024);">Inv</div>
<div style="left:858.8px;top:171.7px;width:59.2px;height:82.5px;border:0.9px solid #d4d4d4;border-radius:3px;box-sizing:border-box;box-shadow:inset 0.6px 0.6px 0 #fff, 0.6px 0.6px 0 #fff"></div>
<div style="left:866.5px;top:169px;width:30.5px;height:5px;background:#fafafa"></div>
<div class="t" style="left:867.54px;top:165.70px;font:normal 10.2px/1 'Liberation Sans', sans-serif;color:#8a8a8a;transform:scaleX(0.894);">Trigger</div>
<div class="t" style="left:870.53px;top:178.70px;font:normal 10.2px/1 'Liberation Sans', sans-serif;color:#9a9a9a;transform:scaleX(0.914);">Slope</div>
<div style="left:862.3px;top:189.4px;width:12px;height:12px;background:radial-gradient(circle,#8c8c8c 0,#8c8c8c 1.8px,#d8d8d8 2.8px,#e2e2e2 5px);border:0.8px solid #cfcfcf;border-radius:50%;box-sizing:border-box"></div>
<div class="t" style="left:878.33px;top:191.70px;font:normal 10.2px/1 'Liberation Sans', sans-serif;color:#a4a4a4;transform:scaleX(0.917);">Positive</div>
<div style="left:862.3px;top:203.2px;width:12px;height:12px;background:#fbfbfb;border:0.8px solid #d6d6d6;border-radius:50%;box-sizing:border-box"></div>
<div class="t" style="left:878.32px;top:205.70px;font:normal 10.2px/1 'Liberation Sans', sans-serif;color:#a4a4a4;transform:scaleX(0.950);">Negative</div>
<div class="t" style="left:863.39px;top:222.00px;font:normal 7.6px/1 'Liberation Serif', serif;color:#8c8c8c;transform:scaleX(1.074);">Delta Th %</div>
<div style="left:864.7px;top:232.5px;width:33.3px;height:16.2px;background:#fff;border:0.8px solid #bdbdbd;border-radius:1.5px;box-sizing:border-box"></div>
<div class="t" style="left:866.09px;top:235.70px;font:normal 10.2px/1 'Liberation Sans', sans-serif;color:#8a8a8a;transform:scaleX(1.007);">25</div>
<div style="left:900.5px;top:232.5px;width:11.7px;height:6.318px;background:linear-gradient(#f7f7f7,#e2e2e2);border:0.7px solid #c0c0c0;border-radius:1.5px;box-sizing:border-box"></div>
<svg style="left:0;top:0" width="900" height="575"><path d="M903.4 237.4L909.4 237.4L906.4 233.8Z" fill="#111"/></svg>
<div style="left:900.5px;top:242.382px;width:11.7px;height:6.318px;background:linear-gradient(#f7f7f7,#e2e2e2);border:0.7px solid #c0c0c0;border-radius:1.5px;box-sizing:border-box"></div>
<svg style="left:0;top:0" width="900" height="575"><path d="M903.4 243.8L909.4 243.8L906.4 247.4Z" fill="#111"/></svg>
<div style="left:857.2px;top:258px;width:11px;height:11px;background:#fdfdfd;border:0.8px solid #c6c6c6;border-radius:1.5px;box-sizing:border-box"></div>
<div class="t" style="left:872.26px;top:258.70px;font:normal 10.2px/1 'Liberation Sans', sans-serif;color:#111;transform:scaleX(1.055);">D/A</div>
<div style="left:857.2px;top:271.6px;width:11px;height:11px;background:#fdfdfd;border:0.8px solid #c6c6c6;border-radius:1.5px;box-sizing:border-box"></div>
<div class="t" style="left:872.34px;top:272.70px;font:normal 10.2px/1 'Liberation Sans', sans-serif;color:#111;transform:scaleX(0.901);">DCremoval</div>
<div style="left:857.2px;top:285.7px;width:11px;height:11px;background:#fdfdfd;border:0.8px solid #dcdcdc;border-radius:1.5px;box-sizing:border-box"></div>
<div class="t" style="left:872.23px;top:286.70px;font:normal 10.2px/1 'Liberation Sans', sans-serif;color:#a8a8a8;transform:scaleX(1.108);">Trig left</div>
<div style="left:857.2px;top:299.7px;width:11px;height:11px;background:#fdfdfd;border:0.8px solid #c6c6c6;border-radius:1.5px;box-sizing:border-box"></div>
<div class="t" style="left:872.33px;top:300.70px;font:normal 10.2px/1 'Liberation Sans', sans-serif;color:#111;transform:scaleX(0.928);">Values</div>
<div style="left:857.2px;top:313.3px;width:11px;height:11px;background:#fdfdfd;border:0.8px solid #dcdcdc;border-radius:1.5px;box-sizing:border-box"></div>
<div class="t" style="left:872.35px;top:313.70px;font:normal 10.2px/1 'Liberation Sans', sans-serif;color:#a8a8a8;transform:scaleX(0.891);">Cepst</div>
<div style="left:822.2px;top:359.7px;width:14.5px;height:14px;background:linear-gradient(#f7f7f7,#e4e4e4);border:0.8px solid #b4b4b4;border-radius:2px;box-sizing:border-box"></div>
<div class="t" style="left:826.46px;top:362.70px;font:normal 10.2px/1 'Liberation Sans', sans-serif;color:#111;transform:scaleX(1.061);">0</div>
<div style="left:749.8px;top:404px;width:160px;height:140px;background:#f6f6f6;border:0.8px solid #cfcfcf;box-sizing:border-box"></div>
<div style="left:787.6px;top:388.9px;width:35.8px;height:15.2px;background:linear-gradient(#f2f2f2,#e6e6e6);border:0.8px solid #cfcfcf;border-bottom:none;border-radius:3px 3px 0 0;box-sizing:border-box"></div>
<div class="t" style="left:794.73px;top:390.70px;font:normal 10.2px/1 'Liberation Sans', sans-serif;color:#555;transform:scaleX(0.931);">More</div>
<div style="left:823.4px;top:388.9px;width:36.2px;height:15.2px;background:linear-gradient(#f2f2f2,#e6e6e6);border:0.8px solid #cfcfcf;border-bottom:none;border-radius:3px 3px 0 0;box-sizing:border-box"></div>
<div class="t" style="left:831.52px;top:390.70px;font:normal 10.2px/1 'Liberation Sans', sans-serif;color:#555;transform:scaleX(0.937);">THD</div>
<div style="left:859.6px;top:388.9px;width:36.9px;height:15.2px;background:linear-gradient(#f2f2f2,#e6e6e6);border:0.8px solid #cfcfcf;border-bottom:none;border-radius:3px 3px 0 0;box-sizing:border-box"></div>
<div class="t" style="left:870.51px;top:390.70px;font:normal 10.2px/1 'Liberation Sans', sans-serif;color:#555;transform:scaleX(0.953);">UC</div>
<div style="left:896.5px;top:388.9px;width:33.5px;height:15.2px;background:linear-gradient(#f2f2f2,#e6e6e6);border:0.8px solid #cfcfcf;border-bottom:none;border-radius:3px 3px 0 0;box-sizing:border-box"></div>
<div class="t" style="left:-0.51px;top:390.70px;font:normal 10.2px/1 'Liberation Sans', sans-serif;color:#555;transform:scaleX(1.000);"></div>
<div style="left:751.5px;top:386.6px;width:35.5px;height:18.4px;background:#f8f8f8;border:0.8px solid #cdcdcd;border-bottom:none;border-radius:3px 3px 0 0;box-sizing:border-box"></div>
<div class="t" style="left:758.01px;top:390.70px;font:normal 10.2px/1 'Liberation Sans', sans-serif;color:#111;transform:scaleX(0.965);">Main</div>
<div style="left:753.9px;top:409.9px;width:94.9px;height:125.1px;border:0.9px solid #d4d4d4;border-radius:3px;box-sizing:border-box;box-shadow:inset 0.6px 0.6px 0 #fff, 0.6px 0.6px 0 #fff"></div>
<div style="left:760.4px;top:411px;width:11.4px;height:11.4px;background:#fdfdfd;border:0.8px solid #c6c6c6;border-radius:1.5px;box-sizing:border-box"></div>
<div class="t" style="left:775.73px;top:411.70px;font:normal 10.2px/1 'Liberation Sans', sans-serif;color:#111;transform:scaleX(0.928);">Stay on top</div>
<div style="left:760.4px;top:424.9px;width:11.4px;height:11.4px;background:#fdfdfd;border:0.8px solid #c6c6c6;border-radius:1.5px;box-sizing:border-box"></div>
<div class="t" style="left:775.74px;top:425.70px;font:normal 10.2px/1 'Liberation Sans', sans-serif;color:#111;transform:scaleX(0.903);">Volt meter</div>
<div style="left:760.4px;top:438.8px;width:11.4px;height:11.4px;background:#fdfdfd;border:0.8px solid #c6c6c6;border-radius:1.5px;box-sizing:border-box"></div>
<div class="t" style="left:775.75px;top:439.70px;font:normal 10.2px/1 'Liberation Sans', sans-serif;color:#111;transform:scaleX(0.882);">Freq. meter</div>
<div style="left:760.4px;top:452.4px;width:11.4px;height:11.4px;background:#fdfdfd;border:0.8px solid #c6c6c6;border-radius:1.5px;box-sizing:border-box"></div>
<div class="t" style="left:775.72px;top:452.70px;font:normal 10.2px/1 'Liberation Sans', sans-serif;color:#111;transform:scaleX(0.948);">Wave Gen./Rec</div>
<div style="left:760.4px;top:466.4px;width:11.4px;height:11.4px;background:#fdfdfd;border:0.8px solid #c6c6c6;border-radius:1.5px;box-sizing:border-box"></div>
<div class="t" style="left:775.73px;top:466.70px;font:normal 10.2px/1 'Liberation Sans', sans-serif;color:#111;transform:scaleX(0.928);">Phase</div>
<div style="left:760.4px;top:480.1px;width:11.4px;height:11.4px;background:#fdfdfd;border:0.8px solid #c6c6c6;border-radius:1.5px;box-sizing:border-box"></div>
<div class="t" style="left:775.71px;top:480.70px;font:normal 10.2px/1 'Liberation Sans', sans-serif;color:#111;transform:scaleX(0.961);">THD view</div>
<div style="left:760.4px;top:493.8px;width:11.4px;height:11.4px;background:#fdfdfd;border:0.8px solid #c6c6c6;border-radius:1.5px;box-sizing:border-box"></div>
<div class="t" style="left:775.73px;top:494.70px;font:normal 10.2px/1 'Liberation Sans', sans-serif;color:#111;transform:scaleX(0.930);">THD+Noise view</div>
<div style="left:760.4px;top:507.8px;width:11.4px;height:11.4px;background:#fdfdfd;border:0.8px solid #c6c6c6;border-radius:1.5px;box-sizing:border-box"></div>
<div class="t" style="left:775.74px;top:508.70px;font:normal 10.2px/1 'Liberation Sans', sans-serif;color:#111;transform:scaleX(0.903);">ZRLC meter</div>
<div style="left:760.4px;top:521.7px;width:11.4px;height:11.4px;background:#fdfdfd;border:0.8px solid #c6c6c6;border-radius:1.5px;box-sizing:border-box"></div>
<div class="t" style="left:775.72px;top:522.70px;font:normal 10.2px/1 'Liberation Sans', sans-serif;color:#111;transform:scaleX(0.941);">Fast Rec./Play</div>
<div style="left:856.4px;top:412px;width:53.6px;height:13.3px;background:linear-gradient(#f7f7f7,#e4e4e4);border:0.8px solid #b4b4b4;border-radius:2px;box-sizing:border-box"></div>
<div class="t" style="left:865.04px;top:413.70px;font:normal 10.2px/1 'Liberation Sans', sans-serif;color:#111;transform:scaleX(0.897);">Capture</div>
<div style="left:856.4px;top:428.9px;width:53.6px;height:13px;background:linear-gradient(#f7f7f7,#e4e4e4);border:0.8px solid #b4b4b4;border-radius:2px;box-sizing:border-box"></div>
<div class="t" style="left:859.04px;top:430.70px;font:normal 10.2px/1 'Liberation Sans', sans-serif;color:#111;transform:scaleX(0.908);">Capture spectrum</div>
<div style="left:856.4px;top:444.9px;width:53.6px;height:13px;background:linear-gradient(#f7f7f7,#e4e4e4);border:0.8px solid #b4b4b4;border-radius:2px;box-sizing:border-box"></div>
<div class="t" style="left:862.01px;top:446.70px;font:normal 10.2px/1 'Liberation Sans', sans-serif;color:#111;transform:scaleX(0.956);">WaveOn</div>
<div style="left:857.7px;top:465.3px;width:52.3px;height:69.7px;border:0.9px solid #d4d4d4;border-radius:3px;box-sizing:border-box;box-shadow:inset 0.6px 0.6px 0 #fff, 0.6px 0.6px 0 #fff"></div>
<div class="t" style="left:871.12px;top:473.70px;font:normal 10.2px/1 'Liberation Sans', sans-serif;color:#111;transform:scaleX(0.950);">wait</div>
<div class="t" style="left:871.14px;top:494.70px;font:normal 10.2px/1 'Liberation Sans', sans-serif;color:#111;transform:scaleX(0.906);">req.</div>
<div class="t" style="left:871.12px;top:515.70px;font:normal 10.2px/1 'Liberation Sans', sans-serif;color:#111;transform:scaleX(0.933);">used</div>
<div style="left:898.6px;top:468px;width:4px;height:20px;background:#e2e2e2"></div>
<div style="left:898.6px;top:489px;width:4px;height:20px;background:#e2e2e2"></div>
<div style="left:898.6px;top:510px;width:4px;height:20px;background:#e2e2e2"></div>
<div class="t" style="left:760.54px;top:538.70px;font:normal 10.2px/1 'Liberation Sans', sans-serif;color:#111;transform:scaleX(0.906);">Max input</div>
<div class="t" style="left:865.54px;top:538.70px;font:normal 10.2px/1 'Liberation Sans', sans-serif;color:#111;transform:scaleX(0.906);">Max input</div>
<div style="left:0px;top:540.4px;width:900px;height:35px;background:#141414"></div>
<div style="left:132px;top:540.4px;width:139.4px;height:35px;background:#343434"></div>
<div style="left:271.4px;top:540.4px;width:139px;height:35px;background:#97511a"></div>
<div style="left:0px;top:572.6px;width:128px;height:3px;background:#76b9ed"></div>
<div style="left:132px;top:572.6px;width:139.4px;height:3px;background:#76b9ed"></div>
<div style="left:271.4px;top:572.6px;width:139px;height:3px;background:#ff8010"></div>
<div style="left:896.4px;top:540.4px;width:0.9px;height:35px;background:#5a5a5a"></div>
<svg style="left:1px;top:546px" width="24" height="24" viewBox="1 546 24 24">
<circle cx="12.6" cy="557.6" r="10.2" fill="#f4f4f4"/>
<circle cx="12.6" cy="557.6" r="9" fill="#2c9a4c"/>
<path d="M8.6 552.4 L8.6 560 Q8.6 562.6 11.6 562.6 Q14 562.6 15.2 560.6 L15.2 552.4 M15.2 560 Q15.6 562.8 18.2 562.2 M8.6 560 L8.2 566" fill="none" stroke="#fff" stroke-width="2.1" stroke-linecap="round"/>
</svg>
<div class="t" style="left:24.89px;top:552.85px;font:normal 10.9px/1 'Liberation Sans', sans-serif;color:#f2f2f2;transform:scaleX(0.930);">µTorrent 2.2.1</div>
<div class="t" style="left:139.89px;top:547.00px;font:normal 15.6px/1 'Liberation Sans', sans-serif;color:#1db81d;transform:scaleX(0.914);transform-origin:0 0;">VA</div>
<div class="t" style="left:152.24px;top:561.40px;font:normal 6.8px/1 'Liberation Sans', sans-serif;color:#d02020;transform:scaleX(1.068);">32</div>
<div class="t" style="left:164.29px;top:552.85px;font:normal 10.9px/1 'Liberation Sans', sans-serif;color:#f2f2f2;transform:scaleX(0.937);">Visual Analyser</div>
<svg style="left:281px;top:546px" width="20" height="24" viewBox="281 546 20 24">
<path d="M284.6 548.6 L288 552.2 Q290.5 551.4 293 552.2 L296.4 548.6 L297.6 556.4 Q297.8 561.6 290.5 567 Q283.2 561.6 283.4 556.4 Z" fill="#f8f8f8"/>
<path d="M284.8 555.2 Q288.2 554.8 289.8 559.2 Q286 560.6 284.8 555.2 Z M296.2 555.2 Q292.8 554.8 291.2 559.2 Q295 560.6 296.2 555.2 Z" fill="#1a1a1a"/>
<path d="M289.2 563.2 Q290.5 561.6 291.8 563.2" fill="none" stroke="#222" stroke-width="0.8"/>
</svg>
<div class="t" style="left:304.29px;top:552.85px;font:normal 10.9px/1 'Liberation Sans', sans-serif;color:#f3e2d2;transform:scaleX(0.945);">100Hz-CD  [foobar...</div>
<svg style="left:730px;top:541px" width="170" height="34" viewBox="730 541 170 34">
<path d="M737.6 560.4 L742.9 555 L748.2 560.4" fill="none" stroke="#f0f0f0" stroke-width="1.2"/>
<rect x="759.6" y="552.4" width="11" height="7.6" fill="none" stroke="#f0f0f0" stroke-width="1"/>
<path d="M765 560 V562.6 M761.6 562.9 H768.6" stroke="#f0f0f0" stroke-width="1"/>
<rect x="756.8" y="551.8" width="3.4" height="3.4" fill="#141414" stroke="#f0f0f0" stroke-width="0.8"/>
<path d="M758.5 555.2 V561.4 H760.4" fill="none" stroke="#f0f0f0" stroke-width="0.8"/>
<path d="M777 556 H779.4 L782.6 553 V562.8 L779.4 559.8 H777 Z" fill="none" stroke="#f0f0f0" stroke-width="0.9"/>
<path d="M784.6 555.6 Q786 557.9 784.6 560.2" fill="none" stroke="#e0e0e0" stroke-width="0.8"/>
<path d="M786.6 554 Q788.8 557.9 786.6 561.8" fill="none" stroke="#b0b0b0" stroke-width="0.8"/>
<path d="M788.7 552.6 Q791.6 557.9 788.7 563.2" fill="none" stroke="#808080" stroke-width="0.8"/>
<path d="M864.6 550.8 H878.6 V561 H870.6 L867.6 563.6 V561 H864.6 Z" fill="#f4f4f4"/>
<path d="M866.6 553.4 H876.6 M866.6 555.9 H876.6 M866.6 558.4 H876.6" stroke="#141414" stroke-width="0.9"/>
<circle cx="878.5" cy="564.4" r="5.9" fill="#141414" stroke="#e8e8e8" stroke-width="0.9"/>
</svg>
<div class="t" style="left:876.18px;top:561.00px;font:normal 8.6px/1 'Liberation Sans', sans-serif;color:#f0f0f0;transform:scaleX(0.975);">1</div>
<div class="t" style="left:812.52px;top:545.70px;font:normal 10.2px/1 'Liberation Sans', sans-serif;color:#f2f2f2;transform:scaleX(0.942);">15:02</div>
<div class="t" style="left:799.91px;top:561.70px;font:normal 10.2px/1 'Liberation Sans', sans-serif;color:#f2f2f2;transform:scaleX(0.961);">25. 3. 2023</div>
</div>
</body></html>
